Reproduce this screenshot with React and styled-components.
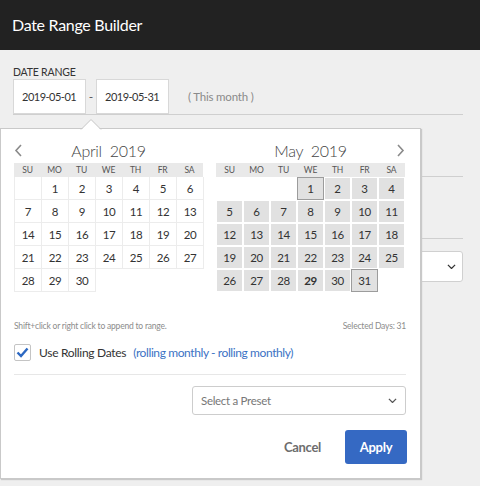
import React from "react";
import styled, { createGlobalStyle } from "styled-components";

const GlobalStyle = createGlobalStyle`
  html, body { margin: 0; padding: 0; }
  body {
    background: #efefef;
    font-family: Lato, "Noto Sans", Arial, sans-serif;
    color: #333;
  }
  * { box-sizing: border-box; }
`;

const Page = styled.div`
  position: relative;
  width: 480px;
  height: 486px;
  overflow: hidden;
  background: #efefef;
`;

const Header = styled.header`
  height: 50px;
  background: #222;
  color: #fff;
  display: flex;
  align-items: center;
  padding: 0 12px 2px;
  font-size: 16px;
  letter-spacing: -0.3px;
`;

const Form = styled.div`
  padding: 16px 17px 0 13px;
`;

const Label = styled.div`
  font-size: 10.5px;
  line-height: 12px;
  color: #333;
  letter-spacing: -0.2px;
  margin-bottom: 1px;
`;

const RangeRow = styled.div`
  display: flex;
  align-items: center;
  border-bottom: 1px solid #cfcfcf;
`;

const DateInput = styled.div`
  width: 73px;
  height: 35px;
  background: #fff;
  border: 1px solid #d8d8d8;
  display: flex;
  align-items: center;
  padding-left: 8px;
  font-size: 11px;
  letter-spacing: -0.5px;
  color: #333;
`;

const Dash = styled.span`
  width: 10px;
  text-align: center;
  font-size: 12px;
  color: #555;
`;

const Hint = styled.span`
  margin-left: 19px;
  font-size: 11.5px;
  color: #8a8a8a;
  letter-spacing: -0.2px;
`;

const Block = styled.div`
  height: ${(p) => p.$h}px;
  border-bottom: 1px solid #cfcfcf;
`;

const BgSelect = styled.div`
  margin-top: 12px;
  height: 31px;
  background: #fff;
  border: 1px solid #d0d0d0;
  border-radius: 3px;
  display: flex;
  align-items: center;
  justify-content: flex-end;
  padding-right: 6px;
`;

const Popup = styled.div`
  position: absolute;
  left: 0;
  top: 128px;
  width: 421px;
  height: 351px;
  background: #fff;
  border: 1px solid #c9c9c9;
  box-shadow: 1px 1px 1px #c9c9c9;
  padding: 10px 14px 14px 13px;
  display: flex;
  flex-direction: column;
`;

const Caret = styled.svg`
  position: absolute;
  left: 80px;
  top: -10px;
  width: 20px;
  height: 11px;
  overflow: visible;
`;

const Calendars = styled.div`
  display: flex;
  gap: 13px;
`;

const Month = styled.div`
  width: 189px;
`;

const MonthHead = styled.div`
  position: relative;
  height: 22px;
  margin-bottom: 2px;
  display: flex;
  align-items: center;
  justify-content: center;
  font-size: 16px;
  font-weight: 300;
  color: #444;
  letter-spacing: -0.3px;
  word-spacing: 4px;
`;

const NavArrow = styled.svg`
  position: absolute;
  top: 5px;
  ${(p) => (p.$side === "left" ? "left: 0;" : "right: 0;")}
  width: 9px;
  height: 13px;
`;

const WeekRow = styled.div`
  display: grid;
  grid-template-columns: repeat(7, 27px);
  height: 14px;
  background: #e9e9e9;
`;

const WeekDay = styled.div`
  display: flex;
  align-items: center;
  justify-content: center;
  font-size: 8.5px;
  color: #555;
  letter-spacing: -0.2px;
`;

const DayGrid = styled.div`
  display: grid;
  grid-template-columns: repeat(7, 27px);
  grid-auto-rows: 23px;
  border-left: ${(p) => (p.$plain ? "1px solid #ececec" : "none")};
`;

const cellStyles = {
  plain: `
    background: #fff;
    border-right: 1px solid #ececec;
    border-bottom: 1px solid #ececec;
  `,
  range: `
    background: #e1e1e1;
    border: 1px solid #fff;
  `,
  edge: `
    background: #e1e1e1;
    border: 1px solid #9c9c9c;
  `,
  blank: `
    background: #fff;
  `,
};

const Day = styled.div`
  display: flex;
  align-items: center;
  justify-content: center;
  font-size: 11.5px;
  color: #333;
  letter-spacing: -0.3px;
  font-weight: ${(p) => (p.$bold ? 700 : 400)};
  ${(p) => cellStyles[p.$kind]}
`;

const InfoRow = styled.div`
  margin-top: 28px;
  display: flex;
  justify-content: space-between;
  font-size: 8.5px;
  line-height: 12px;
  color: #8c8c8c;
  letter-spacing: -0.2px;
`;

const CheckRow = styled.div`
  margin-top: 12px;
  height: 17px;
  display: flex;
  align-items: center;
  font-size: 12px;
  letter-spacing: -0.3px;
`;

const CheckBox = styled.span`
  width: 17px;
  height: 17px;
  border: 1px solid #c4c4c4;
  border-radius: 2px;
  background: #fff;
  display: flex;
  align-items: center;
  justify-content: center;
  margin-right: 8px;
`;

const CheckLabel = styled.span`
  color: #333;
`;

const RollLink = styled.span`
  margin-left: 7px;
  color: #3b72c4;
  letter-spacing: -0.4px;
`;

const Separator = styled.div`
  margin-top: 13px;
  height: 1px;
  background: #e7e7e7;
`;

const PresetSelect = styled.div`
  margin-top: 11px;
  margin-left: 178px;
  height: 31px;
  border: 1px solid #cdcdcd;
  border-radius: 3px;
  display: flex;
  align-items: center;
  justify-content: space-between;
  padding: 0 8px 0 8px;
  font-size: 11.5px;
  color: #777;
  letter-spacing: -0.3px;
`;

const Actions = styled.div`
  margin-top: 15px;
  display: flex;
  justify-content: flex-end;
  align-items: center;
  margin-right: -1px;
`;

const Button = styled.button`
  font-family: inherit;
  font-size: 13px;
  font-weight: 700;
  letter-spacing: -0.3px;
  height: 34px;
  border-radius: 3px;
  border: none;
  cursor: pointer;
  background: ${(p) => (p.$primary ? "#3569c3" : "transparent")};
  color: ${(p) => (p.$primary ? "#fff" : "#6d6d6d")};
  width: ${(p) => (p.$primary ? "62px" : "auto")};
  padding: 0;
  margin-left: ${(p) => (p.$primary ? "24px" : "0")};
`;

const Chevron = ({ size = 10, color = "#444" }) => (
  <svg width={size} height={size * 0.6} viewBox="0 0 10 6">
    <polyline points="1,1 5,5 9,1" fill="none" stroke={color} strokeWidth="1.4" />
  </svg>
);

const WEEK = ["SU", "MO", "TU", "WE", "TH", "FR", "SA"];

function buildDays(startDow, count) {
  const cells = [];
  for (let i = 0; i < startDow; i++) cells.push({ d: null, lead: true });
  for (let d = 1; d <= count; d++) cells.push({ d });
  while (cells.length % 7) cells.push({ d: null, lead: false });
  return cells;
}

function MonthView({ name, year, startDow, count, side, selected }) {
  const cells = buildDays(startDow, count);
  return (
    <Month>
      <MonthHead>
        {side === "left" ? (
          <NavArrow $side="left" viewBox="0 0 9 13">
            <polyline points="7,1 2,6.5 7,12" fill="none" stroke="#8a8a8a" strokeWidth="1.6" />
          </NavArrow>
        ) : (
          <NavArrow $side="right" viewBox="0 0 9 13">
            <polyline points="2,1 7,6.5 2,12" fill="none" stroke="#8a8a8a" strokeWidth="1.6" />
          </NavArrow>
        )}
        <span>
          {name} {year}
        </span>
      </MonthHead>
      <WeekRow>
        {WEEK.map((w) => (
          <WeekDay key={w}>{w}</WeekDay>
        ))}
      </WeekRow>
      <DayGrid $plain={!selected}>
        {cells.map((c, i) => {
          let kind;
          if (c.d === null) kind = !selected && c.lead ? "plain" : "blank";
          else if (selected) kind = c.d === 1 || c.d === count ? "edge" : "range";
          else kind = "plain";
          return (
            <Day key={i} $kind={kind} $bold={selected && c.d === 29}>
              {c.d}
            </Day>
          );
        })}
      </DayGrid>
    </Month>
  );
}

export default function App() {
  return (
    <Page>
      <GlobalStyle />
      <Header>Date Range Builder</Header>
      <Form>
        <Label>DATE RANGE</Label>
        <RangeRow>
          <DateInput>2019-05-01</DateInput>
          <Dash>-</Dash>
          <DateInput>2019-05-31</DateInput>
          <Hint>( This month )</Hint>
        </RangeRow>
        <Block $h={62} />
        <Block $h={62} />
        <BgSelect>
          <Chevron size={9} color="#333" />
        </BgSelect>
      </Form>

      <Popup>
        <Caret viewBox="0 0 20 11">
          <polygon points="0,11 10,1 20,11" fill="#fff" />
          <polyline points="0,10.5 10,0.5 20,10.5" fill="none" stroke="#c9c9c9" strokeWidth="1" />
        </Caret>
        <Calendars>
          <MonthView name="April" year="2019" startDow={1} count={30} side="left" />
          <MonthView name="May" year="2019" startDow={3} count={31} side="right" selected />
        </Calendars>
        <InfoRow>
          <span>Shift+click or right click to append to range.</span>
          <span>Selected Days: 31</span>
        </InfoRow>
        <CheckRow>
          <CheckBox>
            <svg width="13" height="11" viewBox="0 0 13 11">
              <polyline points="1.5,5.5 5,9 11.5,1.5" fill="none" stroke="#2c68c2" strokeWidth="2.4" />
            </svg>
          </CheckBox>
          <CheckLabel>Use Rolling Dates</CheckLabel>
          <RollLink>(rolling monthly - rolling monthly)</RollLink>
        </CheckRow>
        <Separator />
        <PresetSelect>
          <span>Select a Preset</span>
          <Chevron size={9} color="#555" />
        </PresetSelect>
        <Actions>
          <Button>Cancel</Button>
          <Button $primary>Apply</Button>
        </Actions>
      </Popup>
    </Page>
  );
}
